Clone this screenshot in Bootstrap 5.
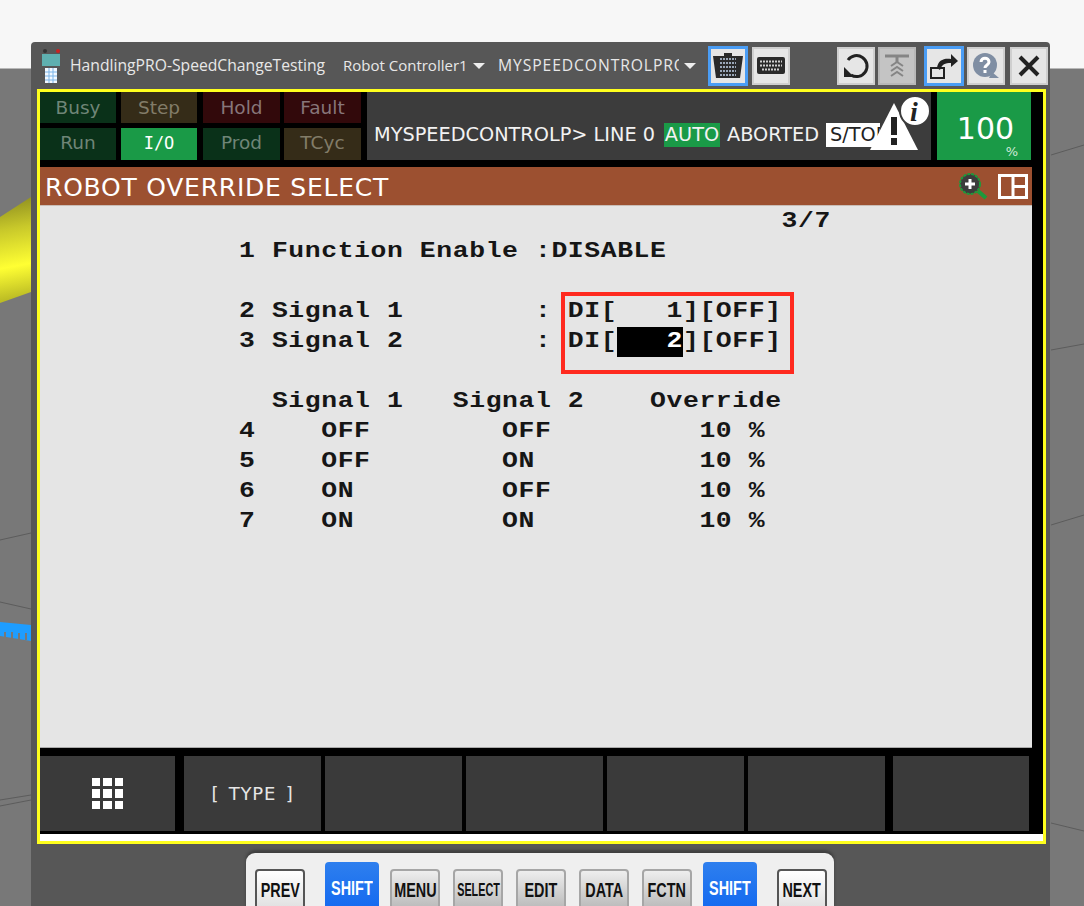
<!DOCTYPE html>
<html>
<head>
  <meta charset="UTF-8">
  <title>ROBOT OVERRIDE SELECT</title>
  <link href="https://cdn.jsdelivr.net/npm/bootstrap@5.3.2/dist/css/bootstrap.min.css" rel="stylesheet">
  <style>
    html, body { height: 906px; overflow: hidden; }
    body { background: #f7f7f7; position: relative; font-family: "Open Sans", "Liberation Sans", sans-serif; }
    .scene { position: absolute; left: 0; top: 0; }
    .pendant { position: absolute; left: 31px; top: 42px; width: 1019px; background: #575757; border-radius: 4px 4px 0 0; }

    .tool-bar { height: 47px; color: #e8e8e8; font-size: 15.7px; padding-left: 10px; white-space: nowrap; }
    .tb-name { width: 273px; margin-left: 9px; flex-shrink: 0; }
    .tb-ctrl { width: 130px; flex-shrink: 0; font-size: 15px; }
    .tb-prog { width: 181px; margin-left: 13px; flex-shrink: 0; overflow: hidden; letter-spacing: .9px; }
    .caret-dn { width: 0; height: 0; flex-shrink: 0; border-left: 6px solid transparent; border-right: 6px solid transparent; border-top: 6px solid #eee; }
    .caret-b { margin-left: 5px; margin-right: 12px; }
    .tool-btn { width: 38px; height: 38px; flex-shrink: 0; background: #e6e6e6; border: 2px solid #cfcfcf; }
    .tool-btn.on { width: 40px; height: 40px; border: 3px solid #4a9df5; }
    .tool-btn.dim { background: #c4c4c4; border-color: #b8b8b8; }
    .tb-g3 { margin-left: 3px; }
    .tb-g4 { margin-left: 4px; }
    .tb-g5 { margin-left: 5px; }
    .tb-g8 { margin-left: 8px; }
    .tb-g47 { margin-left: 47px; }

    .tp-screen { margin-left: 6px; width: 1009px; height: 755px; border: 3px solid #ffff1e; background: #000; padding-right: 11px; }
    .stat-grid { display: grid; grid-template-columns: 81px 82px 81px 77px; grid-template-rows: 36px 32px; }
    .stat-cell { width: 76px; height: 31px; font-size: 18.5px; line-height: 31px; text-align: center; font-family: "DejaVu Sans", sans-serif; }
    .stat-cell:nth-child(4n+3), .stat-cell:nth-child(4n) { width: 77px; }
    .stat-cell:nth-child(n+5) { height: 32px; line-height: 30px; }
    .stat-g { background: #0a3119; color: #6f8577; }
    .stat-y { background: #352c18; color: #827c68; }
    .stat-r { background: #32090b; color: #87767a; }
    .stat-on { background: #1a9a47; color: #fff; font-family: "DejaVu Sans Mono", monospace; font-size: 17px; }

    .msg-box { width: 564px; height: 68px; margin-left: 6px; padding: 18px 0 0 7px; background: #3c3c3c; color: #f2f2f2; font-size: 19.3px; white-space: nowrap; position: relative; font-family: "DejaVu Sans", sans-serif; }
    .msg-line { width: 290px; flex-shrink: 0; }
    .msg-auto { width: 56px; height: 24px; line-height: 24px; flex-shrink: 0; background: #1a9a47; text-align: center; }
    .msg-state { width: 92px; margin-left: 7px; flex-shrink: 0; }
    .msg-st { width: 54px; height: 24px; line-height: 24px; margin-left: 7px; flex-shrink: 0; overflow: hidden; padding-left: 4px; background: #fff; color: #222; }
    .warn-ico { position: absolute; left: 503px; top: 3px; }

    .pct-box { width: 94px; height: 68px; margin-left: 6px; padding-left: 3px; background: #1a9a47; color: #fff; text-align: center; font-size: 30px; line-height: 74px; position: relative; font-family: "DejaVu Sans", sans-serif; }
    .pct-box small { position: absolute; right: 13px; bottom: 0; font-size: 13px; line-height: 16px; color: #cfe9d8; }

    .title-bar { height: 38px; margin-top: 7px; padding: 0 4px 0 5px; background: #9c5030; color: #fff; font-size: 25px; letter-spacing: .76px; line-height: 34px; font-family: "DejaVu Sans", sans-serif; }
    .title-txt { margin-top: 4px; }

    .tp-content { height: 543px; padding: 1px 0 0 199px; background: #e5e5e5; position: relative; border-top: 1px solid #c9bdb6; border-bottom: 1px solid #aaa; }
    .tp-text { width: 700px; margin: 0; overflow: visible; font-family: "Liberation Mono", monospace; font-weight: 700; font-size: 22px; letter-spacing: .5px; line-height: 30px; color: #161616; transform: scaleX(1.2); transform-origin: 0 0; }
    .cur-field { display: inline-block; height: 30px; background: #000; color: #fff; }
    .red-box { position: absolute; left: 521px; top: 86px; width: 233px; height: 82px; border: 4px solid #ff2a1f; }

    .soft-row { margin-top: 8px; height: 75px; }
    .soft-key { width: 137px; height: 75px; margin-left: 4px; background: #3a3a3a; color: #e6e6e6; font-size: 18px; letter-spacing: .8px; word-spacing: 3px; font-family: "DejaVu Sans", sans-serif; }
    .soft-key.sk-menu { width: 135px; margin-left: 0; }
    .soft-key.sk-wide { margin-left: 9px; }
    .soft-key.sk-last { width: 136px; margin-left: 8px; }
    .white-strip { height: 7px; margin: 3px -11px 0 0; background: #fff; }

    .key-panel { margin: 9px 0 0 215px; width: 588px; height: 60px; padding: 16px 0 0 9px; gap: 13px; background: #efefef; border-radius: 9px 9px 0 0; box-shadow: 0 -3px 3px #3f3f3f; }
    .hw-key { width: 50px; height: 44px; flex-shrink: 0; border: 2px solid #a6a6a6; border-radius: 4px; background: linear-gradient(#eee, #b6b6b6); color: #111; text-align: center; line-height: 38px; font-family: "Liberation Sans", sans-serif; white-space: nowrap; }
    .key-lbl { display: block; flex-shrink: 0; font-weight: 700; font-size: 20px; transform: scaleX(.72); }
    .key-lbl.tight { font-size: 18px; transform: scaleX(.6); }
    .hw-key.sharp { border-color: #555; background: linear-gradient(#fff, #dedede); }
    .hw-key.k-prev { margin-right: 9px; }
    .hw-key.k-next { margin-left: 9px; }
    .hw-key.blue { width: 54px; height: 52px; margin: -7px -2px 0; border: 0; background: linear-gradient(#2e7fee, #1167f0); color: #fff; line-height: 52px; }
  </style>
</head>
<body>
  <!-- background of the 3D scene -->
  <svg class="scene" width="1084" height="906">
    <defs>
      <linearGradient id="tube" gradientUnits="userSpaceOnUse" x1="0" y1="200" x2="18" y2="298">
        <stop offset="0" stop-color="#8f8f20"/><stop offset=".3" stop-color="#c8c82a"/><stop offset=".68" stop-color="#ffff33"/><stop offset="1" stop-color="#bcbc24"/>
      </linearGradient>
    </defs>
    <rect y="68" width="1084" height="838" fill="#787878"/>
    <rect y="68" width="1084" height="1" fill="#b8b8b8"/>
    <polygon points="0,217 31,197 31,292 0,303" fill="url(#tube)"/>
    <polygon points="0,622 31,625 31,641 0,636" fill="#1e9dff"/>
    <path d="M5 632v6M12 632v6M19 633v7M26 633v7" stroke="#787878" stroke-width="2"/>
    <path d="M0 602L31 609M0 540L31 533M0 800L31 795M0 806L31 800M1051 823L1084 831M1051 155L1084 145M1051 350L1084 344M1051 525L1084 515" stroke="#5c5c5c" fill="none"/>
    <polygon points="31,840 1050,840 1050,868 868,896 868,906 214,906 213,895 203,888 180,885 40,868 31,860" fill="#575757"/>
    <polygon points="123,906 182,885 203,888 213,895 213,906" fill="#333"/>
  </svg>

  <div class="pendant">
    <div class="tool-bar d-flex align-items-center">
      <svg width="20" height="36" viewBox="0 0 20 36">
        <circle cx="4" cy="3" r="2" fill="#333"/><circle cx="17" cy="3" r="2" fill="#c22"/>
        <rect x="1" y="6" width="18" height="12" fill="#5fb0b0"/>
        <rect x="4" y="20" width="12" height="15" fill="#f2f8ff"/>
        <path d="M4 24H16M4 28H16M4 32H16M8 20V35M12 20V35" stroke="#7ab4e8"/>
      </svg>
      <span class="tb-name">HandlingPRO-SpeedChangeTesting</span>
      <span class="tb-ctrl">Robot Controller1</span>
      <span class="caret-dn"></span>
      <span class="tb-prog">MYSPEEDCONTROLPROG</span>
      <span class="caret-dn caret-b"></span>
      <div class="tool-btn on d-flex align-items-center justify-content-center">
        <svg width="30" height="26" viewBox="0 0 30 26">
          <path d="M11 0H19V3H30L27 25H3L0 3H11Z" fill="#2a2a2a"/>
          <path d="M7 6H23M7 10H23M7 14H23M7 18H23M7 22H23" stroke="#9aa7b8" stroke-width="2" stroke-dasharray="2 1"/>
        </svg>
      </div>
      <div class="tool-btn tb-g4 d-flex align-items-center justify-content-center">
        <svg width="28" height="17" viewBox="0 0 28 17"><rect width="28" height="17" rx="2" fill="#2a2a2a"/><path d="M3 4.500H25M3 8.500H25M5 12.500H23" stroke="#cfcfcf" stroke-width="2" stroke-dasharray="2 1"/></svg>
      </div>
      <div class="tool-btn tb-g47 d-flex align-items-center justify-content-center">
        <svg width="28" height="28" viewBox="0 0 28 28"><path d="M6 8A10.500 10.500 0 1 1 9 23" fill="none" stroke="#222" stroke-width="3"/><path d="M2 15V25H12Z" fill="#222"/></svg>
      </div>
      <div class="tool-btn dim tb-g3 d-flex align-items-center justify-content-center">
        <svg width="26" height="28" viewBox="0 0 26 28"><path d="M1 4H25M13 4V11" stroke="#858585" stroke-width="3" fill="none"/><path d="M7 14L13 10L19 14M7 19L13 15L19 19M7 24L13 20L19 24" stroke="#858585" stroke-width="2" fill="none"/></svg>
      </div>
      <div class="tool-btn on tb-g8 d-flex align-items-center justify-content-center">
        <svg width="30" height="28" viewBox="0 0 30 28"><path d="M2 16H15V26H2Z" fill="none" stroke="#222" stroke-width="2"/><path d="M8 16C9 8 15 6 22 7V2L29 9L22 15V11C16 11 13 12 11 18Z" fill="#222"/></svg>
      </div>
      <div class="tool-btn tb-g3 d-flex align-items-center justify-content-center">
        <svg width="28" height="28" viewBox="0 0 28 28"><circle cx="13" cy="13" r="12" fill="#7f8ea3"/><path d="M20 20L27 26H17Z" fill="#7f8ea3"/><path d="M9 10C9 5 17 5 17 10C17 13 13 13 13 16" fill="none" stroke="#fff" stroke-width="3"/><rect x="11.500" y="18" width="3" height="3" fill="#fff"/></svg>
      </div>
      <div class="tool-btn tb-g5 d-flex align-items-center justify-content-center">
        <svg width="24" height="24" viewBox="0 0 24 24"><path d="M3 3L21 21M21 3L3 21" stroke="#222" stroke-width="4"/></svg>
      </div>
    </div>

    <div class="tp-screen">
      <div class="d-flex">
        <div class="stat-grid">
          <div class="stat-cell stat-g">Busy</div>
          <div class="stat-cell stat-y">Step</div>
          <div class="stat-cell stat-r">Hold</div>
          <div class="stat-cell stat-r">Fault</div>
          <div class="stat-cell stat-g">Run</div>
          <div class="stat-cell stat-on">I/O</div>
          <div class="stat-cell stat-g">Prod</div>
          <div class="stat-cell stat-y">TCyc</div>
        </div>
        <div class="msg-box d-flex align-items-center">
          <span class="msg-line">MYSPEEDCONTROLP&gt; LINE 0</span>
          <span class="msg-auto">AUTO</span>
          <span class="msg-state">ABORTED</span>
          <span class="msg-st">S/TOP</span>
          <svg class="warn-ico" width="60" height="58" viewBox="0 0 60 58">
            <path d="M24 8L0 55H48Z" fill="#fff"/>
            <rect x="21" y="22" width="6" height="18" fill="#222"/><rect x="21" y="43" width="6" height="7" fill="#222"/>
            <circle cx="45" cy="16" r="15" fill="#fff" stroke="#3c3c3c" stroke-width="2"/>
            <text x="44" y="26" font-family="Liberation Serif, serif" font-style="italic" font-weight="700" font-size="28" text-anchor="middle" fill="#222">i</text>
          </svg>
        </div>
        <div class="pct-box">100<small>%</small></div>
      </div>

      <div class="title-bar d-flex justify-content-between align-items-center">
        <span class="title-txt">ROBOT OVERRIDE SELECT</span>
        <span class="d-flex align-items-center gap-2">
          <svg width="32" height="30" viewBox="0 0 32 30"><circle cx="12" cy="13" r="10" fill="#3c3c3c" stroke="#1c9a3c" stroke-width="2" stroke-dasharray="3 1"/><path d="M7 13H17M12 8V18" stroke="#fff" stroke-width="3"/><path d="M20 20L28 27" stroke="#1c9a3c" stroke-width="4"/></svg>
          <svg width="30" height="25" viewBox="0 0 30 25"><path d="M1.500 1.500H28.500V23.500H1.500ZM15 1.500V23.500M15 12.500H28.500" fill="none" stroke="#fff" stroke-width="3"/></svg>
        </span>
      </div>

      <div class="tp-content">
<pre class="tp-text">                                 3/7
1 Function Enable :DISABLE

2 Signal 1        : DI[   1][OFF]
3 Signal 2        : DI[<span class="cur-field">   2</span>][OFF]

  Signal 1   Signal 2    Override
4    OFF        OFF         10 %
5    OFF        ON          10 %
6    ON         OFF         10 %
7    ON         ON          10 %</pre>
        <div class="red-box"></div>
      </div>

      <div class="soft-row d-flex">
        <div class="soft-key sk-menu d-flex align-items-center justify-content-center">
          <svg width="31" height="31" viewBox="0 0 31 31" fill="#fff"><path d="M0 0h8v8H0zM11 0h9v8h-9zM23 0h8v8h-8zM0 11h8v9H0zM11 11h9v9h-9zM23 11h8v9h-8zM0 23h8v8H0zM11 23h9v8h-9zM23 23h8v8h-8z"/></svg>
        </div>
        <div class="soft-key sk-wide d-flex align-items-center justify-content-center">[ TYPE ]</div>
        <div class="soft-key"></div>
        <div class="soft-key"></div>
        <div class="soft-key"></div>
        <div class="soft-key"></div>
        <div class="soft-key sk-last"></div>
      </div>
      <div class="white-strip"></div>
    </div>

    <div class="key-panel d-flex align-items-start">
      <div class="hw-key sharp k-prev d-flex justify-content-center"><span class="key-lbl">PREV</span></div>
      <div class="hw-key blue d-flex justify-content-center"><span class="key-lbl">SHIFT</span></div>
      <div class="hw-key d-flex justify-content-center"><span class="key-lbl">MENU</span></div>
      <div class="hw-key d-flex justify-content-center"><span class="key-lbl tight">SELECT</span></div>
      <div class="hw-key d-flex justify-content-center"><span class="key-lbl">EDIT</span></div>
      <div class="hw-key d-flex justify-content-center"><span class="key-lbl">DATA</span></div>
      <div class="hw-key d-flex justify-content-center"><span class="key-lbl">FCTN</span></div>
      <div class="hw-key blue d-flex justify-content-center"><span class="key-lbl">SHIFT</span></div>
      <div class="hw-key sharp k-next d-flex justify-content-center"><span class="key-lbl">NEXT</span></div>
    </div>
  </div>
</body>
</html>
